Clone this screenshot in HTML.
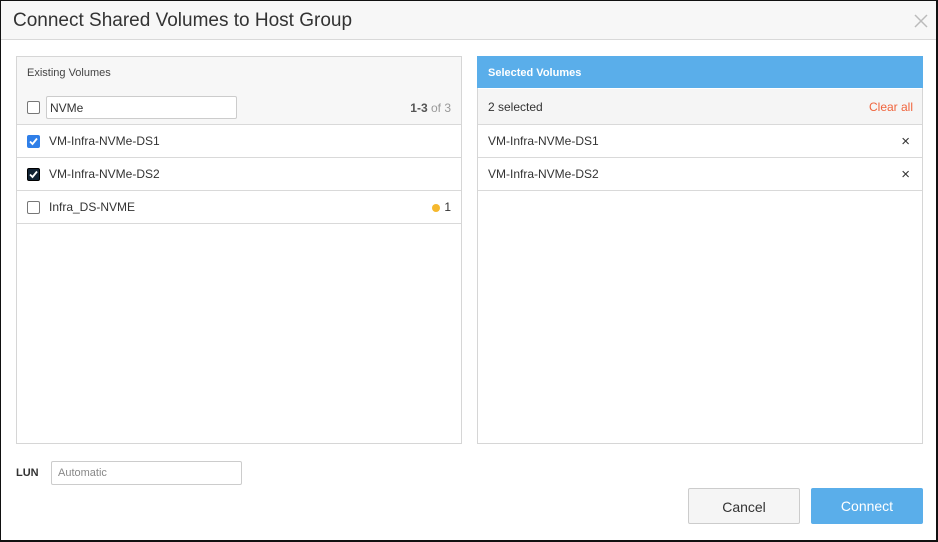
<!DOCTYPE html>
<html><head><style>
*{box-sizing:border-box;margin:0;padding:0}
body{width:938px;height:542px;background:#fff;font-family:"Liberation Sans",sans-serif;position:relative;overflow:hidden}
.frame{position:absolute;left:0;top:0;width:938px;height:542px;border:1px solid #111;border-right-width:2px;border-bottom-width:2px}
.hdr{position:absolute;left:1px;top:1px;width:935px;height:39px;background:#f7f7f7;border-bottom:1px solid #d9d9d9}
.hdr .t{position:absolute;left:12px;top:9px;font-size:19px;color:#333}
.x{position:absolute;left:912px;top:12px;width:16px;height:16px}
.panel{position:absolute;top:56px;width:446px;height:388px;border:1px solid #d6d6d6}
.row{position:absolute;left:0;right:0;height:33px;border-bottom:1px solid #d9d9d9;font-size:12px;color:#333}
.cb{position:absolute;left:10px;top:10px;width:13px;height:13px;border:1px solid #777;border-radius:2px;background:#fff}
.lbl{position:absolute;left:32px;top:9px}
.del{position:absolute;right:12px;top:8px;font-size:15px;color:#333}
.btn{position:absolute;top:488px;width:112px;height:36px;font-size:14px;text-align:center;line-height:36px;border-radius:2px}
</style></head><body>
<div class="frame"></div>
<div class="hdr"><div class="t">Connect Shared Volumes to Host Group</div>
<svg class="x" viewBox="0 0 16 16"><path d="M2 2L14 14M14 2L2 14" stroke="#bbb" stroke-width="1.5"/></svg></div>

<div class="panel" style="left:16px">
 <div class="row" style="top:0;height:32px;background:#f7f7f7;border-bottom:none"><div style="position:absolute;left:10px;top:10px;font-size:11px;color:#444">Existing Volumes</div></div>
 <div class="row" style="top:32px;height:36px;background:#f7f7f7">
  <div class="cb" style="top:12px"></div>
  <div style="position:absolute;left:29px;top:7px;width:191px;height:23px;border:1px solid #ccc;background:#fff;border-radius:2px;font-size:12px;padding:4px 3px;color:#333">NVMe</div>
  <div style="position:absolute;right:10px;top:12px;font-size:12px;color:#999"><b style="color:#555">1-3</b> of 3</div>
 </div>
 <div class="row" style="top:68px"><div class="cb" style="background:#2f7fe8;border-color:#2f7fe8"><svg width="11" height="11" viewBox="0 0 11 11" style="position:absolute;left:0;top:0"><path d="M2 5.5L4.5 8L9 2.5" stroke="#fff" stroke-width="1.8" fill="none"/></svg></div><div class="lbl">VM-Infra-NVMe-DS1</div></div>
 <div class="row" style="top:101px"><div class="cb" style="background:#123;border-color:#000"><svg width="11" height="11" viewBox="0 0 11 11" style="position:absolute;left:0;top:0"><path d="M2 5.5L4.5 8L9 2.5" stroke="#fff" stroke-width="1.8" fill="none"/></svg></div><div class="lbl">VM-Infra-NVMe-DS2</div></div>
 <div class="row" style="top:134px"><div class="cb"></div><div class="lbl">Infra_DS-NVME</div>
  <div style="position:absolute;right:21px;top:13px;width:8px;height:8px;border-radius:50%;background:#f5b82e"></div><div style="position:absolute;right:10px;top:9px">1</div></div>
</div>

<div class="panel" style="left:477px">
 <div class="row" style="top:0;height:32px;background:#5aaeea;border:none;margin:-1px;"><div style="position:absolute;left:11px;top:11px;font-size:11px;color:#fff;font-weight:bold">Selected Volumes</div></div>
 <div class="row" style="top:32px;height:36px;background:#f5f5f5"><div style="position:absolute;left:10px;top:11px">2 selected</div><div style="position:absolute;right:9px;top:11px;color:#f0643c">Clear all</div></div>
 <div class="row" style="top:68px"><div class="lbl" style="left:10px">VM-Infra-NVMe-DS1</div><div class="del">×</div></div>
 <div class="row" style="top:101px"><div class="lbl" style="left:10px">VM-Infra-NVMe-DS2</div><div class="del">×</div></div>
</div>

<div style="position:absolute;left:16px;top:467px;font-size:11px;font-weight:bold;color:#333">LUN</div>
<div style="position:absolute;left:51px;top:461px;width:191px;height:24px;border:1px solid #ccc;border-radius:2px;font-size:11px;color:#888;padding:5px 6px">Automatic</div>
<div class="btn" style="left:688px;background:#f5f5f5;border:1px solid #ccc;color:#333">Cancel</div>
<div class="btn" style="left:811px;background:#5aaeea;color:#fff">Connect</div>
</body></html>
